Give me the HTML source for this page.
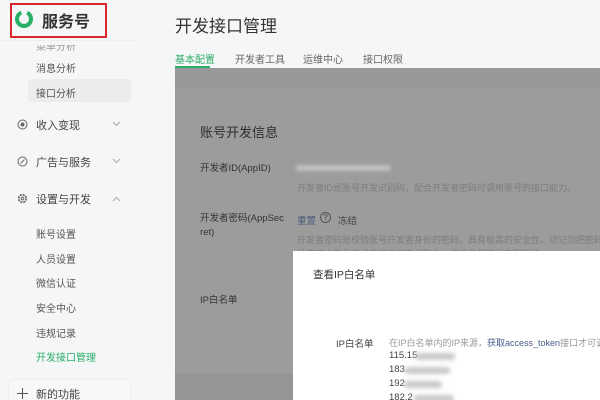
<!DOCTYPE html>
<html><head><meta charset="utf-8"><style>
*{margin:0;padding:0;box-sizing:border-box}
html,body{width:600px;height:400px;overflow:hidden}
body{background:#f5f6f8;font-family:"Liberation Sans","Noto Sans CJK SC",sans-serif;color:#333}
#r{position:relative;width:600px;height:400px;overflow:hidden}
.a{position:absolute;white-space:nowrap}
.nav{font-size:10px;color:#555;left:36px}
.grp{font-size:11px;color:#444;left:36px}
.chev{left:112px}
.blur{position:absolute;background:#c8c8c8;filter:blur(2px);border-radius:3px}
</style></head><body><div id="r">
<!-- logo -->
<div class="a" style="left:10px;top:3px;width:97px;height:35px;border:2px solid #d8262c"></div>
<svg class="a" style="left:14px;top:9px" width="20" height="20" viewBox="0 0 20 20"><circle cx="10" cy="10" r="7" fill="none" stroke="#2aae67" stroke-width="4" stroke-dasharray="30 6"/></svg>
<div class="a" style="left:42px;top:8px;font-size:16px;color:#333;font-weight:bold">服务号</div>
<div class="a" style="left:0;top:40px;width:140px;height:1px;background:#eceef0"></div>
<div class="a nav" style="top:38px;color:#999;clip-path:inset(7px 0 0 0)">菜单分析</div>
<div class="a nav" style="top:60px">消息分析</div>
<div class="a" style="left:28px;top:79px;width:103px;height:23px;background:#ebecee;border-radius:4px"></div>
<div class="a nav" style="top:85px">接口分析</div>
<svg class="a" style="left:17px;top:119px" width="11" height="11"><circle cx="5.5" cy="5.5" r="4.5" fill="none" stroke="#666"/><circle cx="5.5" cy="5.5" r="2" fill="#666"/></svg>
<div class="a grp" style="top:117px">收入变现</div>
<svg class="a chev" style="top:121px" width="9" height="6"><path d="M1 1l3.5 3.5L8 1" fill="none" stroke="#aaa"/></svg>
<svg class="a" style="left:17px;top:156px" width="11" height="11"><circle cx="5.5" cy="5.5" r="4.5" fill="none" stroke="#666"/><path d="M3.5 7.5L7.5 3.5" stroke="#666"/></svg>
<div class="a grp" style="top:154px">广告与服务</div>
<svg class="a chev" style="top:158px" width="9" height="6"><path d="M1 1l3.5 3.5L8 1" fill="none" stroke="#aaa"/></svg>
<svg class="a" style="left:17px;top:193px" width="11" height="11"><circle cx="5.5" cy="5.5" r="3.8" fill="none" stroke="#666" stroke-width="1.8" stroke-dasharray="2 1"/><circle cx="5.5" cy="5.5" r="1.4" fill="none" stroke="#666"/></svg>
<div class="a grp" style="top:191px">设置与开发</div>
<svg class="a chev" style="top:196px" width="9" height="6"><path d="M1 5l3.5-3.5L8 5" fill="none" stroke="#aaa"/></svg>
<div class="a nav" style="top:226px">账号设置</div>
<div class="a nav" style="top:251px">人员设置</div>
<div class="a nav" style="top:275px">微信认证</div>
<div class="a nav" style="top:300px">安全中心</div>
<div class="a nav" style="top:325px">违规记录</div>
<div class="a nav" style="top:349px;color:#2aae67">开发接口管理</div>
<div class="a" style="left:8px;top:379px;width:123px;height:30px;background:#f7f8f9;border:1px solid #eceef0;border-radius:5px"></div>
<svg class="a" style="left:17px;top:388px" width="11" height="11"><path d="M5.5 0v11M0 5.5h11" stroke="#555"/></svg>
<div class="a grp" style="top:386px">新的功能</div>
<!-- header -->
<div class="a" style="left:175px;top:12px;font-size:17px;color:#333">开发接口管理</div>
<div class="a" style="left:175px;top:51px;font-size:10px;color:#2aae67">基本配置</div>
<div class="a" style="left:235px;top:51px;font-size:10px;color:#666">开发者工具</div>
<div class="a" style="left:303px;top:51px;font-size:10px;color:#666">运维中心</div>
<div class="a" style="left:363px;top:51px;font-size:10px;color:#666">接口权限</div>
<!-- grey -->
<div class="a" style="left:175px;top:68px;width:425px;height:332px;background:#9c9c9c"></div>
<div class="a" style="left:175px;top:68px;width:425px;height:20px;background:#979898"></div>
<div class="a" style="left:175px;top:66px;width:35px;height:2px;background:#2aae67"></div>
<div class="a" style="left:175px;top:374px;width:118px;height:26px;background:#959595"></div>
<div class="a" style="left:200px;top:122px;font-size:13px;color:#2e2e2e">账号开发信息</div>
<div class="a" style="left:200px;top:160px;font-size:9.5px;color:#333">开发者ID(AppID)</div>
<div class="blur" style="left:296px;top:166px;width:95px;height:4px;background:#d2d2d2"></div>
<div class="a" style="left:297px;top:181px;font-size:9px;color:#7c7c7c">开发者ID是账号开发识别码，配合开发者密码可调用账号的接口能力。</div>
<div class="a" style="left:200px;top:212px;font-size:9.5px;color:#333;line-height:14px">开发者密码(AppSec<br>ret)</div>
<div class="a" style="left:297px;top:213px;font-size:9.5px;color:#4a5a7a">重置</div>
<div class="a" style="left:320px;top:212px;width:11px;height:11px;border:1px solid #555;border-radius:50%;font-size:8px;text-align:center;line-height:9px;color:#444">?</div>
<div class="a" style="left:338px;top:213px;font-size:9.5px;color:#444">冻结</div>
<div class="a" style="left:297px;top:233px;font-size:9px;color:#7c7c7c">开发者密码是校验账号开发者身份的密码，具有极高的安全性。切记勿把密码直接</div>
<div class="a" style="left:297px;top:247px;font-size:9px;color:#7c7c7c">给第三方开发者或直接存储在代码中，请妥善保管并定期更换</div>
<div class="a" style="left:200px;top:292px;font-size:9.5px;color:#333">IP白名单</div>
<!-- modal -->
<div class="a" style="left:293px;top:251px;width:307px;height:149px;background:#fff"></div>
<div class="a" style="left:313px;top:267px;font-size:10.5px;color:#333">查看IP白名单</div>
<div class="a" style="left:336px;top:336px;font-size:9.5px;color:#444">IP白名单</div>
<div class="a" style="left:389px;top:336px;font-size:9px;color:#999">在IP白名单内的IP来源，<span style="color:#4a5a8a">获取access_token</span>接口才可调用</div>
<div class="a" style="left:389px;top:350px;font-size:9.5px;color:#444">115.15</div><div class="blur" style="left:415px;top:353px;width:40px;height:7px"></div>
<div class="a" style="left:389px;top:364px;font-size:9.5px;color:#444">183.</div><div class="blur" style="left:405px;top:367px;width:45px;height:7px"></div>
<div class="a" style="left:389px;top:378px;font-size:9.5px;color:#444">192</div><div class="blur" style="left:404px;top:381px;width:38px;height:7px"></div>
<div class="a" style="left:389px;top:392px;font-size:9.5px;color:#444">182.2</div><div class="blur" style="left:414px;top:395px;width:40px;height:7px"></div>
</div></body></html>
